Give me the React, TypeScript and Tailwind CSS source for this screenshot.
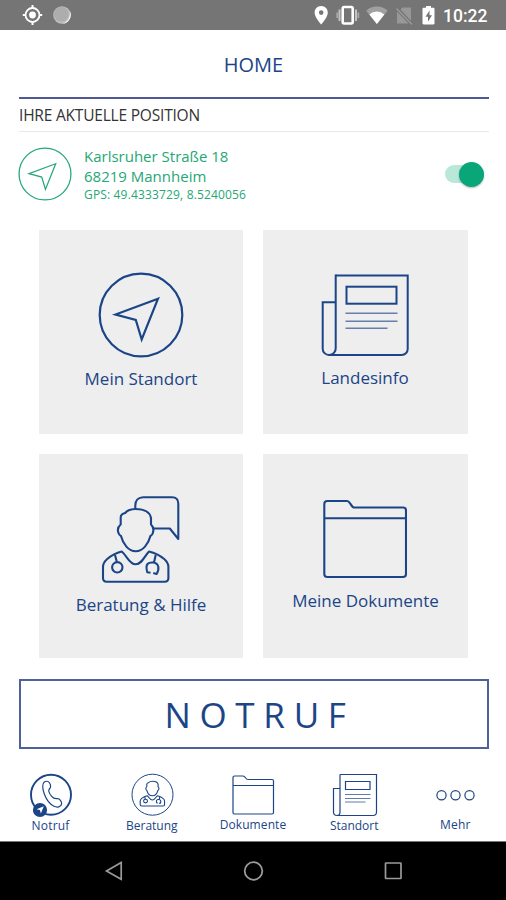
import type { ReactNode } from "react";

function StatusBar() {
  return (
    <header className="flex h-[30px] items-center bg-[#757575] pl-[22px] pr-[19px] text-white">
      <svg width="21" height="22" viewBox="22 4 21 22" fill="none">
        <circle cx="32.5" cy="15" r="7" stroke="#fff" strokeWidth="1.800" />
        <circle cx="32.5" cy="15" r="3.4" fill="#fff" />
        <path d="M32.5 5v3M32.5 22v3M22.8 15h3M39.2 15h3" stroke="#fff" strokeWidth="2" />
      </svg>
      <svg className="ml-[9px]" width="20" height="20" viewBox="52 5 20 20">
        <circle cx="62" cy="15" r="8.8" fill="#bdbdbd" />
        <path d="M69.500 10.500a8.800 8.800 0 0 1-8 13.300a10.500 10.500 0 0 0 8-13.300" fill="#f4f4f4" />
        <circle cx="61.300" cy="14.300" r="7.300" fill="#adadad" />
      </svg>
      <svg className="ml-auto" width="128" height="22" viewBox="312 4 128 22" fill="none">
        <path
          d="M321.200 6c-3.800 0-6.600 2.900-6.600 6.500 0 4.900 6.600 12 6.600 12s6.600-7.100 6.600-12c0-3.600-2.800-6.500-6.600-6.500zm0 4.300a2.300 2.300 0 1 1 0 4.600a2.300 2.300 0 0 1 0-4.600z"
          fill="#fff"
          fillRule="evenodd"
        />
        <rect x="342.700" y="7" width="10" height="16.500" rx="1.500" stroke="#fff" strokeWidth="2.600" />
        <path d="M339.500 9.500v11.500M356 9.500v11.500" stroke="#c4c4c4" strokeWidth="2" />
        <path d="M337.200 12.500v5.500M358.300 12.500v5.500" stroke="#a8a8a8" strokeWidth="1.800" />
        <path d="M366.200 10.700a16 16 0 0 1 21.400 0L376.900 24z" fill="#a0a0a0" />
        <path d="M369.300 14.400a11 11 0 0 1 15 0L376.900 24z" fill="#fff" />
        <path d="M400.500 9.500l2-2H411v13.300zM397 11.500l11.500 12H397z" fill="#989898" />
        <path d="M396.500 8.500l15.500 16" stroke="#989898" strokeWidth="1.500" />
        <path
          d="M426 6h5v1.700h2.300c.7 0 1.200.5 1.200 1.200v14.400c0 .7-.5 1.200-1.200 1.200h-9.600c-.7 0-1.200-.5-1.200-1.200V8.900c0-.7.500-1.200 1.200-1.200h2.300z"
          fill="#fff"
        />
        <path d="M429.500 10.500l-4 6.200h2.500v5l4-6.500h-2.500z" fill="#757575" />
      </svg>
      <span className="ml-[3px] w-11 whitespace-nowrap pt-[3px] font-[Roboto] text-[17.500px] font-medium leading-none">
        10:22
      </span>
    </header>
  );
}

function LocationIcon({ className, strokeWidth }: { className: string; strokeWidth: number }) {
  return (
    <svg className={className} viewBox="98 272 86 86" fill="none" stroke="currentColor" strokeWidth={strokeWidth}>
      <circle cx="141" cy="315" r="41.300" />
      <path d="M158 298.700L115.500 314.500l20.300 5.500L141.700 339.500z" />
    </svg>
  );
}

function NewspaperIcon() {
  return (
    <svg width="88" height="84" viewBox="321 273 88 84" fill="none" stroke="currentColor" strokeWidth="2">
      <path d="M335.700 275.500h72v73.500a6 6 0 0 1-6 6h-72.700a6.300 6.300 0 0 1-6.300-6.300v-46.400h13" />
      <path d="M335.700 274.500v73.500a6.500 6.500 0 0 1-6.500 7" />
      <rect x="346.500" y="286.700" width="50" height="17" />
      <path d="M345.500 313.300h52M345.500 321.300h52M345.500 328.300h42" strokeWidth="1.500" strokeOpacity=".65" />
    </svg>
  );
}

function DoctorFigure() {
  return (
    <>
      <path d="M135.700 509c-5 0-8.500 1.500-10.500 4-2.500.5-4.500 1.500-4.500 4.500v7c-2.500 2-3.500 5.500-2 9 .5 1.500 1.500 2 2.300 2.500 2 8 7.500 15.300 14.700 15.300s12.700-7.300 14.700-15.300c.8-.5 1.800-1 2.300-2.500 1.200-3.500.5-7-1.700-9v-6.500c-1-6-7.500-9-15.300-9z" />
      <path d="M121.700 551.500c-6 1.500-11 4.500-14.500 7.500-3 2.500-4.200 5-4.200 8v11c0 2.500 1.500 3.700 3.700 3.700h58c2.300 0 3.700-1.200 3.700-3.700v-11c0-3-1.200-5.500-4.200-8-4-3.300-9-6-15.200-7.500-4.500 4.500-7 12.800-13.300 12.800s-8.500-8.300-14-12.800z" />
      <path d="M115 555l1.800 6.700M155.700 555l-1.700 7.500M150.500 572.800l-3.200-.5c-2.500-9 1.200-10 5.500-9.800 6.200.3 7 6.500 3.800 11.500l-3.300-1" />
      <circle cx="117.300" cy="567.300" r="5.200" />
    </>
  );
}

function AdviceIcon() {
  return (
    <svg
      width="80"
      height="88"
      viewBox="101 496 80 88"
      fill="none"
      stroke="currentColor"
      strokeWidth="2.100"
      strokeLinejoin="round"
    >
      <path d="M135.300 508.500v-3c0-5 3-8.200 8-8.200H172c4 0 6.300 2.500 6.300 6.500V539l-8.500-10.500H154" />
      <DoctorFigure />
    </svg>
  );
}

function FolderIcon() {
  return (
    <svg width="84" height="80" viewBox="323 499 84 80" fill="none" stroke="currentColor" strokeWidth="2.100">
      <path d="M324.300 574v-70c0-2 1-3 3-3h20c3 0 3.700 6.500 7 6.500h48.700c2 0 3 1.200 3 3V574c0 2-1 3-3 3h-75.700c-2 0-3-1-3-3zM324.300 518.300H406" />
    </svg>
  );
}

function Tile({ label, labelClass, children }: { label: string; labelClass: string; children: ReactNode }) {
  return (
    <button className="flex h-[204px] flex-col items-center bg-[#eee]">
      {children}
      <span className={`whitespace-nowrap text-[17px] leading-6 ${labelClass}`}>{label}</span>
    </button>
  );
}

function NavItem({ label, labelClass, children }: { label: string; labelClass: string; children: ReactNode }) {
  return (
    <button className="flex flex-col items-center">
      <svg width="50" height="46" viewBox="0 0 50 46" fill="none" stroke="currentColor">
        {children}
      </svg>
      <span className={`whitespace-nowrap leading-3 ${labelClass}`}>{label}</span>
    </button>
  );
}

function BottomNav() {
  return (
    <nav className="grid h-[69px] grid-cols-5">
      <NavItem label="Notruf" labelClass="mt-[2px] text-[12px] tracking-[0.2px]">
        <circle cx="25" cy="22.700" r="20" strokeWidth="1.900" />
        <path
          d="M17.800 10.500c1.800-1.800 4.500-1.600 5.600.2 1.600 2.500 1.700 4.500 0 6.300-1.300 1.400-.2 4.400 2.300 7.400 2.300 2.800 3.900 2.500 5.700 2.200 2.200-.2 4.500 3 4.200 5.200-.5 3.300-4.500 4-7.600 2.500-4.500-2.200-7.700-7-9.700-12.300-1.600-4.500-2.300-9-.5-11.500z"
          strokeWidth="1.200"
        />
        <circle cx="14" cy="38" r="7.100" fill="currentColor" stroke="none" />
        <path d="M17.800 34.300l-7.300 3 3.400.8 1 3.400z" fill="#fff" stroke="none" />
      </NavItem>
      <NavItem label="Beratung" labelClass="mt-[2px] text-[12px]">
        <circle cx="25.500" cy="22.700" r="20.500" strokeWidth="1" />
        <g transform="translate(-25.100 -163.200) scale(.372 .339)" strokeWidth="3">
          <DoctorFigure />
        </g>
      </NavItem>
      <NavItem label="Dokumente" labelClass="mt-px text-[12px] tracking-[0.1px]">
        <path
          d="M5 40.500V5.500c0-1 .5-1.500 1.500-1.500H15c2.500 0 2.500 3.500 5 3.500h24c1 0 1.500.7 1.500 1.700v31.300c0 1-.7 1.500-1.500 1.500H6.500c-1 0-1.500-.5-1.500-1.500zM5 13.500h40.500"
          strokeWidth="1.200"
        />
      </NavItem>
      <NavItem label="Standort" labelClass="mt-[2px] text-[12px]">
        <path
          d="M11 2.500h36.500V40c0 2-1.500 3.500-3.500 3.500H8C6 43.500 4.500 42 4.500 40V16.500H11M11 2.500V40c0 2-1 3.500-3 3.500M16.500 9.500H41v8H16.500z"
          strokeWidth="1.200"
        />
        <path d="M16 22.500h25.500M16 26.500h25.500M16 30h20.500" strokeOpacity=".7" />
      </NavItem>
      <NavItem label="Mehr" labelClass="mt-px text-[12px] tracking-[0.2px]">
        <circle cx="11.500" cy="23.300" r="4.600" strokeWidth="1.200" />
        <circle cx="25.500" cy="23.300" r="4.600" strokeWidth="1.200" />
        <circle cx="39.500" cy="23.300" r="4.600" strokeWidth="1.200" />
      </NavItem>
    </nav>
  );
}

function SystemBar() {
  return (
    <footer className="flex h-[59px] items-center justify-between border-t border-[#777] bg-black pl-[104px] pr-[102px] text-[#9a9a9a]">
      <svg width="20" height="22" viewBox="0 0 20 22" fill="none" stroke="currentColor" strokeWidth="1.700">
        <path d="M17.200 2.500v16.800L2.500 11z" />
      </svg>
      <svg width="22" height="22" viewBox="0 0 22 22" fill="none" stroke="currentColor" strokeWidth="1.800">
        <circle cx="10.500" cy="11" r="8.800" />
      </svg>
      <svg width="20" height="22" viewBox="0 0 20 22" fill="none" stroke="currentColor" strokeWidth="1.700">
        <rect x="1.500" y="3" width="15.500" height="15.500" rx=".5" />
      </svg>
    </footer>
  );
}

export default function App() {
  return (
    <div className="flex h-[900px] w-[506px] flex-col overflow-hidden bg-white font-['Open_Sans',sans-serif] text-[#1b4587]">
      <StatusBar />
      <main className="flex flex-col pl-[19px] pr-[17px]">
        <h1 className="flex h-[69px] items-center justify-center border-b-2 border-[#505995] pr-px pt-[3px] text-[20px]">
          HOME
        </h1>
        <h2 className="flex h-[33px] items-center whitespace-nowrap border-b border-[#e8e8e8] pt-[2px] text-[15.500px] tracking-[-0.2px] text-[#333]">
          IHRE AKTUELLE POSITION
        </h2>

        <section className="flex h-[98px] items-start pt-[15px] text-[#25a776]">
          <LocationIcon className="h-[54px] w-[54px] -ml-px" strokeWidth={2} />
          <div className="-mt-px ml-[12px] whitespace-nowrap text-[15px] leading-5">
            <p>Karlsruher Straße 18</p>
            <p>68219 Mannheim</p>
            <p className="pt-px text-[12px] leading-4 tracking-[0.16px]">GPS: 49.4333729, 8.5240056</p>
          </div>
          <div className="ml-auto mr-[5px] mt-[18px] flex h-[18px] w-[39px] items-center justify-end rounded-full bg-[#b9e7d8]">
            <div className="h-[25px] w-[25px] shrink-0 rounded-full bg-[#09a679] shadow-[0_1px_2px_rgba(0,0,0,0.3)]" />
          </div>
        </section>

        <section className="grid grid-cols-[204px_205px] gap-5 px-5">
          <Tile label="Mein Standort" labelClass="mt-[9px]">
            <LocationIcon className="mt-[42px] h-[86px] w-[86px]" strokeWidth={2.2} />
          </Tile>
          <Tile label="Landesinfo" labelClass="mt-[9px] pr-px">
            <div className="mt-[43px] pr-[2px]">
              <NewspaperIcon />
            </div>
          </Tile>
          <Tile label="Beratung & Hilfe" labelClass="mt-[9px]">
            <div className="mt-[42px]">
              <AdviceIcon />
            </div>
          </Tile>
          <Tile label="Meine Dokumente" labelClass="mt-[10px]">
            <div className="mt-[45px] pr-[2px]">
              <FolderIcon />
            </div>
          </Tile>
        </section>

        <button className="mt-[21px] flex h-[70px] items-center justify-center border-2 border-[#4d629b] pl-[11px] pt-[2px] text-[35px] tracking-[8.700px]">
          NOTRUF
        </button>
      </main>
      <div className="mt-[23px]">
        <BottomNav />
        <SystemBar />
      </div>
    </div>
  );
}
